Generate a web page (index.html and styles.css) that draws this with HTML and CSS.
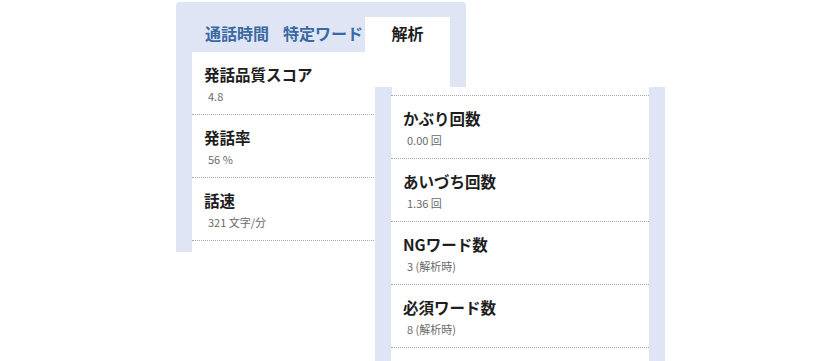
FILE: index.html
```html
<!DOCTYPE html>
<html lang="ja">
<head>
  <meta charset="UTF-8" />
  <meta name="viewport" content="width=device-width, initial-scale=1.0"/>
  <title>解析</title>
  <link rel="stylesheet" href="styles.css">
</head>
<body>
  <div class="stage">
    <div class="panel panel-back">
      <div class="tabs">
        <div class="tab">通話時間</div>
        <div class="tab">特定ワード</div>
        <div class="tab active">解析</div>
      </div>
      <div class="list">
        <div class="item">
          <div class="item-title">発話品質スコア</div>
          <div class="item-value">4.8</div>
        </div>
        <div class="item">
          <div class="item-title">発話率</div>
          <div class="item-value">56 %</div>
        </div>
        <div class="item">
          <div class="item-title">話速</div>
          <div class="item-value">321 文字/分</div>
        </div>
      </div>
    </div>

    <div class="panel panel-front">
      <div class="list">
        <div class="item">
          <div class="item-title">かぶり回数</div>
          <div class="item-value">0.00 回</div>
        </div>
        <div class="item">
          <div class="item-title">あいづち回数</div>
          <div class="item-value">1.36 回</div>
        </div>
        <div class="item">
          <div class="item-title">NGワード数</div>
          <div class="item-value">3 (解析時)</div>
        </div>
        <div class="item">
          <div class="item-title">必須ワード数</div>
          <div class="item-value">8 (解析時)</div>
        </div>
        <div class="item"></div>
      </div>
    </div>
  </div>
</body>
</html>
```

FILE: styles.css
```css
body {
  margin: 0;
  background: #ffffff;
  font-family: "Noto Sans CJK JP", "Noto Sans", sans-serif;
  color: #1e1e1e;
}
.stage {
  position: relative;
  width: 840px;
  height: 361px;
  overflow: hidden;
}
.panel {
  position: absolute;
  width: 290px;
  box-sizing: border-box;
  background: #dfe5f4;
  padding: 0 16px;
}
.panel-back {
  left: 176px;
  top: 2px;
  height: 250px;
  border-radius: 4px 4px 0 0;
}
.panel-front {
  left: 375px;
  top: 87px;
  height: 300px;
  padding-top: 8px;
  background: linear-gradient(#dfe5f4, #dfe5f4) left / 17px 100% no-repeat,
              linear-gradient(#dfe5f4, #dfe5f4) right / 16px 100% no-repeat,
              #ffffff;
}
.panel-front .list {
  border-top: 1px dotted #a8a8a8;
}
.tabs {
  display: flex;
  align-items: flex-end;
  height: 50px;
}
.tab {
  height: 35px;
  line-height: 33px;
  font-size: 16px;
  font-weight: bold;
  color: #3a69a3;
  padding-left: 13px;
  padding-right: 1px;
}
.tab.active {
  margin-left: auto;
  width: 85px;
  box-sizing: border-box;
  padding: 0;
  text-align: center;
  background: #ffffff;
  color: #1e1e1e;
}
.list {
  background: #ffffff;
  height: 200px;
}
.panel-front .list {
  height: 280px;
}
.item {
  height: 62px;
  border-bottom: 1px dotted #a8a8a8;
}
.item-title {
  padding: 12px 0 0 12px;
  font-size: 15.5px;
  line-height: 20px;
  font-weight: bold;
}
.item-value {
  padding: 5px 0 0 16px;
  font-size: 11px;
  line-height: 15px;
  color: #6a6a6a;
}
```
